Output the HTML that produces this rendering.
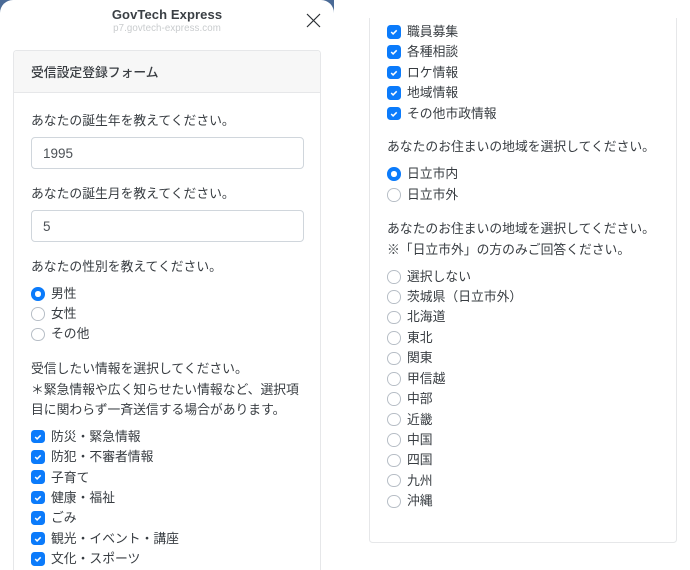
<!DOCTYPE html>
<html lang="ja">
<head>
<meta charset="utf-8">
<title>GovTech Express</title>
<style>
html,body{margin:0;padding:0;background:#fff;width:690px;height:570px;overflow:hidden}
#w{position:relative;width:690px;height:570px;overflow:hidden;font-family:"Liberation Sans","Noto Sans CJK JP",sans-serif;color:#373c41;font-size:12.8px;filter:blur(.25px)}
.a{position:absolute}
.t{position:absolute;line-height:20px;height:20px;white-space:nowrap;margin-top:.7px}
.card{position:absolute;box-sizing:border-box;background:#fff;border:1px solid #e6e7e9}
.in{position:absolute;left:31px;width:272.5px;height:32px;box-sizing:border-box;border:1px solid #d0d6dc;border-radius:4px;background:#fff;padding-left:11px;line-height:31px;font-size:13.5px;color:#4c5156}
.c,.r{position:absolute;width:13.5px;height:13.5px;box-sizing:border-box}
.c{background:#0b7bfb;border-radius:3.5px}
.c svg{position:absolute;left:0;top:0}
.r{border-radius:50%;border:1px solid #b7bec6;background:#fff}
.r.on{border:4.2px solid #0b7bfb}
</style>
</head>
<body>
<div id="w">
<!-- header corners -->
<div class="a" style="left:0;top:0;width:334px;height:20px;background:#4a6a96"></div>
<div class="a" style="left:0;top:0;width:334px;height:570px;background:#fff;border-radius:13px 13px 0 0"></div>

<div class="a" style="left:0;top:4.5px;width:334px;text-align:center;font-size:13px;font-weight:700;color:#3a3f44;line-height:20px;letter-spacing:.1px">GovTech Express</div>
<div class="a" style="left:0;top:22px;width:334px;text-align:center;font-size:9.7px;color:#c9ccce;line-height:14px;letter-spacing:.1px">p7.govtech-express.com</div>
<svg class="a" style="left:306px;top:13px" width="15" height="15" viewBox="0 0 15 15"><path d="M1 1L14 14M14 1L1 14" stroke="#2b2f33" stroke-width="1.2" fill="none"/></svg>

<!-- left card -->
<div class="card" style="left:13px;top:50px;width:308px;height:540px;border-radius:3.5px 3.5px 0 0"></div>
<div class="a" style="left:14px;top:51px;width:306px;height:41px;background:#f7f7f7;border-bottom:1px solid #e6e7e9;border-radius:3px 3px 0 0"></div>
<div class="t" style="left:31px;top:62px;font-weight:500;color:#3a3e43">受信設定登録フォーム</div>

<div class="t" style="left:31px;top:110px">あなたの誕生年を教えてください。</div>
<div class="in" style="top:137px">1995</div>
<div class="t" style="left:31px;top:183px">あなたの誕生月を教えてください。</div>
<div class="in" style="top:210px">5</div>
<div class="t" style="left:31px;top:256px">あなたの性別を教えてください。</div>

<div class="r on" style="left:31px;top:287px"></div><div class="t" style="left:51px;top:283.5px">男性</div>
<div class="r" style="left:31px;top:307px"></div><div class="t" style="left:51px;top:303.5px">女性</div>
<div class="r" style="left:31px;top:327.5px"></div><div class="t" style="left:51px;top:323.5px">その他</div>

<div class="t" style="left:31px;top:358px">受信したい情報を選択してください。</div>
<div class="t" style="left:31px;top:379px">＊緊急情報や広く知らせたい情報など、選択項</div>
<div class="t" style="left:31px;top:399px">目に関わらず一斉送信する場合があります。</div>

<div class="c" style="left:31px;top:429.5px"><svg width="14" height="14" viewBox="0 0 14 14"><path d="M4.2 7l1.9 1.9 3.6-3.6" stroke="#fff" stroke-width="1.5" fill="none"/></svg></div><div class="t" style="left:51px;top:426px">防災・緊急情報</div>
<div class="c" style="left:31px;top:450px"><svg width="14" height="14" viewBox="0 0 14 14"><path d="M4.2 7l1.9 1.9 3.6-3.6" stroke="#fff" stroke-width="1.5" fill="none"/></svg></div><div class="t" style="left:51px;top:446.5px">防犯・不審者情報</div>
<div class="c" style="left:31px;top:470px"><svg width="14" height="14" viewBox="0 0 14 14"><path d="M4.2 7l1.9 1.9 3.6-3.6" stroke="#fff" stroke-width="1.5" fill="none"/></svg></div><div class="t" style="left:51px;top:467px">子育て</div>
<div class="c" style="left:31px;top:490.5px"><svg width="14" height="14" viewBox="0 0 14 14"><path d="M4.2 7l1.9 1.9 3.6-3.6" stroke="#fff" stroke-width="1.5" fill="none"/></svg></div><div class="t" style="left:51px;top:487px">健康・福祉</div>
<div class="c" style="left:31px;top:511px"><svg width="14" height="14" viewBox="0 0 14 14"><path d="M4.2 7l1.9 1.9 3.6-3.6" stroke="#fff" stroke-width="1.5" fill="none"/></svg></div><div class="t" style="left:51px;top:507.5px">ごみ</div>
<div class="c" style="left:31px;top:531.5px"><svg width="14" height="14" viewBox="0 0 14 14"><path d="M4.2 7l1.9 1.9 3.6-3.6" stroke="#fff" stroke-width="1.5" fill="none"/></svg></div><div class="t" style="left:51px;top:528px">観光・イベント・講座</div>
<div class="c" style="left:31px;top:552px"><svg width="14" height="14" viewBox="0 0 14 14"><path d="M4.2 7l1.9 1.9 3.6-3.6" stroke="#fff" stroke-width="1.5" fill="none"/></svg></div><div class="t" style="left:51px;top:548.5px">文化・スポーツ</div>

<!-- right card -->
<div class="card" style="left:369px;top:-20px;width:308px;height:563px;border-radius:0 0 3.5px 3.5px"></div>
<div class="a" style="left:360px;top:0;width:325px;height:18px;background:#fff"></div>

<div class="c" style="left:387px;top:25px"><svg width="14" height="14" viewBox="0 0 14 14"><path d="M4.2 7l1.9 1.9 3.6-3.6" stroke="#fff" stroke-width="1.5" fill="none"/></svg></div><div class="t" style="left:407px;top:21px">職員募集</div>
<div class="c" style="left:387px;top:45px"><svg width="14" height="14" viewBox="0 0 14 14"><path d="M4.2 7l1.9 1.9 3.6-3.6" stroke="#fff" stroke-width="1.5" fill="none"/></svg></div><div class="t" style="left:407px;top:41.5px">各種相談</div>
<div class="c" style="left:387px;top:65.5px"><svg width="14" height="14" viewBox="0 0 14 14"><path d="M4.2 7l1.9 1.9 3.6-3.6" stroke="#fff" stroke-width="1.5" fill="none"/></svg></div><div class="t" style="left:407px;top:62px">ロケ情報</div>
<div class="c" style="left:387px;top:86px"><svg width="14" height="14" viewBox="0 0 14 14"><path d="M4.2 7l1.9 1.9 3.6-3.6" stroke="#fff" stroke-width="1.5" fill="none"/></svg></div><div class="t" style="left:407px;top:82.5px">地域情報</div>
<div class="c" style="left:387px;top:106.5px"><svg width="14" height="14" viewBox="0 0 14 14"><path d="M4.2 7l1.9 1.9 3.6-3.6" stroke="#fff" stroke-width="1.5" fill="none"/></svg></div><div class="t" style="left:407px;top:103px">その他市政情報</div>

<div class="t" style="left:387px;top:136.5px">あなたのお住まいの地域を選択してください。</div>
<div class="r on" style="left:387px;top:167px"></div><div class="t" style="left:407px;top:163.5px">日立市内</div>
<div class="r" style="left:387px;top:188px"></div><div class="t" style="left:407px;top:184px">日立市外</div>

<div class="t" style="left:387px;top:218px">あなたのお住まいの地域を選択してください。</div>
<div class="t" style="left:387px;top:239px">※「日立市外」の方のみご回答ください。</div>

<div class="r" style="left:387px;top:270px"></div><div class="t" style="left:407px;top:266px">選択しない</div>
<div class="r" style="left:387px;top:290px"></div><div class="t" style="left:407px;top:286.5px">茨城県（日立市外）</div>
<div class="r" style="left:387px;top:310.5px"></div><div class="t" style="left:407px;top:306.5px">北海道</div>
<div class="r" style="left:387px;top:331px"></div><div class="t" style="left:407px;top:327.5px">東北</div>
<div class="r" style="left:387px;top:351.5px"></div><div class="t" style="left:407px;top:347.5px">関東</div>
<div class="r" style="left:387px;top:372px"></div><div class="t" style="left:407px;top:368px">甲信越</div>
<div class="r" style="left:387px;top:392px"></div><div class="t" style="left:407px;top:388.5px">中部</div>
<div class="r" style="left:387px;top:412.5px"></div><div class="t" style="left:407px;top:409px">近畿</div>
<div class="r" style="left:387px;top:433px"></div><div class="t" style="left:407px;top:429.5px">中国</div>
<div class="r" style="left:387px;top:453.5px"></div><div class="t" style="left:407px;top:449.5px">四国</div>
<div class="r" style="left:387px;top:473.5px"></div><div class="t" style="left:407px;top:470.5px">九州</div>
<div class="r" style="left:387px;top:494.5px"></div><div class="t" style="left:407px;top:490.5px">沖縄</div>
</div>
</body>
</html>
